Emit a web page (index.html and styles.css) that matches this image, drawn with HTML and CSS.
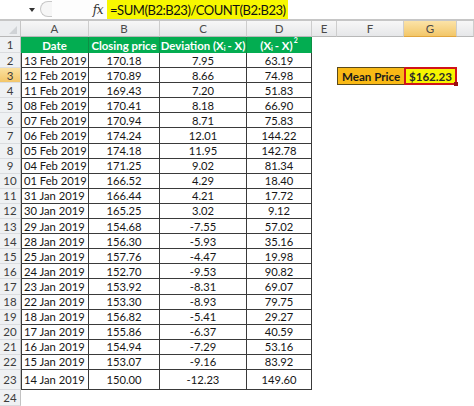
FILE: index.html
```html
<!DOCTYPE html>
<html>
<head>
<meta charset="utf-8">
<link rel="stylesheet" href="styles.css">
</head>
<body>
<div class="app">
  <div class="fbar">
    <div class="namebox"><span class="arrow"></span></div>
    <div class="knob"></div>
    <div class="fxarea"><span class="fx">fx</span></div>
    <div class="formula">=SUM(B2:B23)/COUNT(B2:B23)</div>
  </div>
  <div class="sheet">
    <div class="row colhead">
      <div class="corner"><span class="tri"></span></div>
      <div class="ch">A</div><div class="ch">B</div><div class="ch">C</div><div class="ch">D</div>
      <div class="ch">E</div><div class="ch">F</div><div class="ch sel">G</div><div class="ch"></div>
    </div>
    <div class="row r1">
      <div class="rn">1</div>
      <div class="hd">Date</div>
      <div class="hd">Closing price</div>
      <div class="hd">Deviation (X<sub>i</sub> - X)</div>
      <div class="hd">(X<sub>i</sub> - X)<sup>2</sup></div>
    </div>
    <div class="row"><div class="rn">2</div><div class="c a">13 Feb 2019</div><div class="c">170.18</div><div class="c">7.95</div><div class="c">63.19</div></div>
    <div class="row"><div class="rn rsel">3</div><div class="c a">12 Feb 2019</div><div class="c">170.89</div><div class="c">8.66</div><div class="c">74.98</div><div class="e"></div><div class="mean-label">Mean Price</div><div class="mean-val">$162.23<span class="handle"></span></div></div>
    <div class="row"><div class="rn">4</div><div class="c a">11 Feb 2019</div><div class="c">169.43</div><div class="c">7.20</div><div class="c">51.83</div></div>
    <div class="row"><div class="rn">5</div><div class="c a">08 Feb 2019</div><div class="c">170.41</div><div class="c">8.18</div><div class="c">66.90</div></div>
    <div class="row"><div class="rn">6</div><div class="c a">07 Feb 2019</div><div class="c">170.94</div><div class="c">8.71</div><div class="c">75.83</div></div>
    <div class="row"><div class="rn">7</div><div class="c a">06 Feb 2019</div><div class="c">174.24</div><div class="c">12.01</div><div class="c">144.22</div></div>
    <div class="row"><div class="rn">8</div><div class="c a">05 Feb 2019</div><div class="c">174.18</div><div class="c">11.95</div><div class="c">142.78</div></div>
    <div class="row"><div class="rn">9</div><div class="c a">04 Feb 2019</div><div class="c">171.25</div><div class="c">9.02</div><div class="c">81.34</div></div>
    <div class="row"><div class="rn">10</div><div class="c a">01 Feb 2019</div><div class="c">166.52</div><div class="c">4.29</div><div class="c">18.40</div></div>
    <div class="row"><div class="rn">11</div><div class="c a">31 Jan 2019</div><div class="c">166.44</div><div class="c">4.21</div><div class="c">17.72</div></div>
    <div class="row"><div class="rn">12</div><div class="c a">30 Jan 2019</div><div class="c">165.25</div><div class="c">3.02</div><div class="c">9.12</div></div>
    <div class="row"><div class="rn">13</div><div class="c a">29 Jan 2019</div><div class="c">154.68</div><div class="c">-7.55</div><div class="c">57.02</div></div>
    <div class="row"><div class="rn">14</div><div class="c a">28 Jan 2019</div><div class="c">156.30</div><div class="c">-5.93</div><div class="c">35.16</div></div>
    <div class="row"><div class="rn">15</div><div class="c a">25 Jan 2019</div><div class="c">157.76</div><div class="c">-4.47</div><div class="c">19.98</div></div>
    <div class="row"><div class="rn">16</div><div class="c a">24 Jan 2019</div><div class="c">152.70</div><div class="c">-9.53</div><div class="c">90.82</div></div>
    <div class="row"><div class="rn">17</div><div class="c a">23 Jan 2019</div><div class="c">153.92</div><div class="c">-8.31</div><div class="c">69.07</div></div>
    <div class="row"><div class="rn">18</div><div class="c a">22 Jan 2019</div><div class="c">153.30</div><div class="c">-8.93</div><div class="c">79.75</div></div>
    <div class="row"><div class="rn">19</div><div class="c a">18 Jan 2019</div><div class="c">156.82</div><div class="c">-5.41</div><div class="c">29.27</div></div>
    <div class="row"><div class="rn">20</div><div class="c a">17 Jan 2019</div><div class="c">155.86</div><div class="c">-6.37</div><div class="c">40.59</div></div>
    <div class="row"><div class="rn">21</div><div class="c a">16 Jan 2019</div><div class="c">154.94</div><div class="c">-7.29</div><div class="c">53.16</div></div>
    <div class="row"><div class="rn">22</div><div class="c a">15 Jan 2019</div><div class="c">153.07</div><div class="c">-9.16</div><div class="c">83.92</div></div>
    <div class="row r23"><div class="rn">23</div><div class="c a">14 Jan 2019</div><div class="c">150.00</div><div class="c">-12.23</div><div class="c">149.60</div></div>
    <div class="row r24"><div class="rn">24</div></div>
  </div>
</div>
</body>
</html>
```
FILE: styles.css
```css
* { box-sizing: border-box; }
html, body { margin: 0; padding: 0; background: #fff; }
body { width: 474px; height: 406px; overflow: hidden; font-family: "Lato", "Liberation Sans", sans-serif; }
.app { display: flex; flex-direction: column; }

.fbar {
  height: 21px;
  display: flex;
  align-items: stretch;
  background: #fff;
  border-bottom: 2px solid #c6c6c6;
}
.namebox { width: 40px; position: relative; display: flex; align-items: center; justify-content: flex-end; padding-right: 5px; }
.arrow { width: 0; height: 0; border-left: 3px solid transparent; border-right: 3px solid transparent; border-top: 4px solid #333; }
.knob { width: 12px; margin: 1px 0 2px 0; border: 1px solid #c8c8c8; border-right: none; border-radius: 9px 0 0 9px; background: #f6f6f6; }
.fxarea { width: 55px; display: flex; align-items: center; justify-content: flex-end; padding-right: 4px; background: #fdfdfd; }
.fx { font-family: "DejaVu Serif", serif; font-style: italic; font-size: 12px; color: #333; letter-spacing: -0.5px; }
.formula { background: #f7f700; flex: none; display: flex; align-items: center; padding: 0 2px 0 3px; font-size: 13px; color: #111; letter-spacing: -0.45px; white-space: nowrap; }

.sheet { display: flex; flex-direction: column; }
.row {
  display: grid;
  grid-template-columns: 21px 68px 71px 87px 65px 25px 67px 53px 17px;
  height: 15.1px;
  font-size: 11.2px;
  color: #151515;
}
.colhead { height: 16px; }
.r1 { height: 16px; }
.r23 { height: 20px; }
.r24 { height: 16px; }

.corner { background: #eceef0; border-right: 1px solid #c6c6c6; border-bottom: 1px solid #b8b8b8; position: relative; }
.tri { position: absolute; right: 3px; bottom: 2px; width: 0; height: 0; border-left: 8px solid transparent; border-bottom: 8px solid #d0d3d6; }
.ch {
  background: linear-gradient(#f7f7f7, #e6e7e9);
  border-right: 1px solid #cdcdcd;
  border-bottom: 1px solid #b8b8b8;
  display: flex; align-items: center; justify-content: center;
  color: #4a4a4a; font-size: 11.5px;
}
.ch.sel { background: linear-gradient(#fbe3a8, #f3c769); border-bottom-color: #e1a53d; }

.rn {
  background: #eff1f3;
  border-right: 1px solid #c2c2c2;
  border-bottom: 1px solid #dadcdf;
  display: flex; align-items: center; justify-content: center;
  color: #3c3c3c; font-size: 11.5px;
}
.rn.rsel { background: linear-gradient(#fbe1a0, #f3c669); }

.hd {
  background: #03ad51;
  color: #fff;
  font-weight: bold;
  display: flex; align-items: center; justify-content: center;
  border-right: 1px solid #0d8f45;
  white-space: nowrap;
  font-size: 11.4px;
}
.hd sub { font-size: 7px; vertical-align: baseline; position: relative; top: 3px; line-height: 0; margin-right: 2px; }
.hd sup { font-size: 7px; vertical-align: baseline; position: relative; top: -5px; line-height: 0; margin-left: 1px; }

.c {
  border-right: 1px solid #3a3a3a;
  border-bottom: 1px solid #3a3a3a;
  display: flex; align-items: center; justify-content: center;
  white-space: nowrap;
}
.c.a { justify-content: flex-start; padding-left: 2px; border-left: 1px solid #3a3a3a; }

.mean-label {
  margin: -1px 0 -2px 0;
  background: #f9b915;
  border: 1px solid #5a4a1a;
  border-right: none;
  font-weight: bold;
  display: flex; align-items: center; padding-left: 4px;
  font-size: 11.6px;
  color: #1a1a1a;
}
.mean-val {
  margin: -1px 0 -2px 0;
  background: #f7f500;
  border: 2px solid #d0141a;
  display: flex; align-items: center; justify-content: center;
  font-weight: bold;
  color: #2a2a2a;
  position: relative;
  font-size: 11.6px;
}
.handle { position: absolute; right: -3px; bottom: -3px; width: 4px; height: 4px; background: #9a0e10; }
```
